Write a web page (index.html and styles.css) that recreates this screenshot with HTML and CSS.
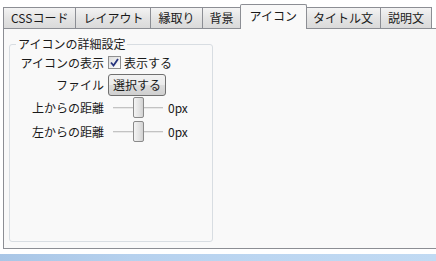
FILE: index.html
```html
<!DOCTYPE html>
<html lang="ja">
<head>
    <meta charset="UTF-8">
    <meta name="viewport" content="width=device-width, initial-scale=1.0">
    <title>アイコンの詳細設定</title>
    <link rel="stylesheet" href="styles.css">
</head>
<body>
    <div class="tabs">
        <div class="tab">CSSコード</div>
        <div class="tab">レイアウト</div>
        <div class="tab">縁取り</div>
        <div class="tab">背景</div>
        <div class="tab active">アイコン</div>
        <div class="tab">タイトル文</div>
        <div class="tab">説明文</div>
    </div>

    <div class="panel">
        <fieldset class="group">
            <legend>アイコンの詳細設定</legend>
            <div class="form-grid">
                <span class="label">アイコンの表示</span>
                <label class="check">
                    <span class="check-box">
                        <svg width="9" height="9" viewBox="0 0 9 9"><path d="M1 4.5 L3.5 7.5 L8 1" fill="none" stroke="#27347e" stroke-width="1.8"/></svg>
                    </span>
                    表示する
                </label>

                <span class="label">ファイル</span>
                <div><button class="file-btn">選択する</button></div>

                <span class="label">上からの距離</span>
                <div class="slider-row">
                    <input type="range" class="slider" min="-100" max="100" value="0">
                    <span class="value">0px</span>
                </div>

                <span class="label">左からの距離</span>
                <div class="slider-row">
                    <input type="range" class="slider" min="-100" max="100" value="0">
                    <span class="value">0px</span>
                </div>
            </div>
        </fieldset>
    </div>

    <div class="taskbar"></div>
</body>
</html>
```

FILE: styles.css
```css
body {
    margin: 0;
    background-color: #fff;
    color: #1a1a1a;
    font-family: "Noto Sans CJK JP", "Noto Sans", sans-serif;
    font-size: 12px;
    line-height: 16px;
}

.tabs {
    display: flex;
    align-items: flex-end;
    padding: 4px 0 0 3px;
}

.tab {
    position: relative;
    height: 21px;
    line-height: 20px;
    padding: 0 7px;
    border: 1px solid #8c8e94;
    border-bottom: none;
    border-left: none;
    box-sizing: border-box;
    background: linear-gradient(#f3f3f3, #e4e4e4 50%, #dadada);
    white-space: nowrap;
}

.tab:first-child {
    border-left: 1px solid #8c8e94;
}

.tab.active {
    z-index: 1;
    height: 25px;
    line-height: 21px;
    margin: 0 -1px -1px -2px;
    padding: 0 9px;
    border-left: 1px solid #8c8e94;
    border-radius: 2px 2px 0 0;
    background: #f9f9f9;
}

.panel {
    height: 219px;
    border: 1px solid #8c8e94;
    border-right: none;
    margin-left: 3px;
    background-color: #f9f9f9;
}

.group {
    width: 204px;
    height: 206px;
    box-sizing: border-box;
    margin: 7px 0 0 5px;
    padding: 0;
    border: 1px solid #d8dde2;
    border-radius: 3px;
}

.group legend {
    margin-left: 6px;
    padding: 0 2px;
}

.form-grid {
    display: grid;
    grid-template-columns: 94px auto;
    grid-template-rows: 21px 23px 24px 24px;
    column-gap: 4px;
    align-items: center;
}

.label {
    text-align: right;
}

.check {
    display: flex;
    align-items: center;
    gap: 3px;
}

.check-box {
    display: flex;
    align-items: center;
    justify-content: center;
    width: 13px;
    height: 13px;
    box-sizing: border-box;
    border: 1px solid #8f8f8f;
    background: linear-gradient(135deg, #dcdcdc, #fff);
}

.file-btn {
    height: 22px;
    padding: 0 4px;
    font: inherit;
    color: #1a1a1a;
    border: 1px solid #707070;
    border-radius: 3px;
    background: linear-gradient(#f2f2f2, #ebebeb 50%, #dddddd 51%, #cfcfcf);
}

.slider-row {
    display: flex;
    align-items: center;
}

.slider {
    -webkit-appearance: none;
    appearance: none;
    width: 50px;
    height: 21px;
    margin: 0 0 0 5px;
    background: transparent;
}

.slider::-webkit-slider-runnable-track {
    height: 2px;
    background: #c3c3c3;
    border-bottom: 1px solid #e8e8e8;
}

.slider::-webkit-slider-thumb {
    -webkit-appearance: none;
    width: 11px;
    height: 21px;
    margin-top: -10px;
    box-sizing: border-box;
    border: 1px solid #8a8a8a;
    border-radius: 2px;
    background: linear-gradient(90deg, #f4f4f4, #e2e2e2 60%, #d2d2d2);
}

.value {
    margin-left: 5px;
}

.taskbar {
    height: 7px;
    margin-top: 5px;
    background: linear-gradient(90deg, #a9c6e6, #b6d1ee 30%, #bcd6f1 60%, #c1daf3);
}
```
